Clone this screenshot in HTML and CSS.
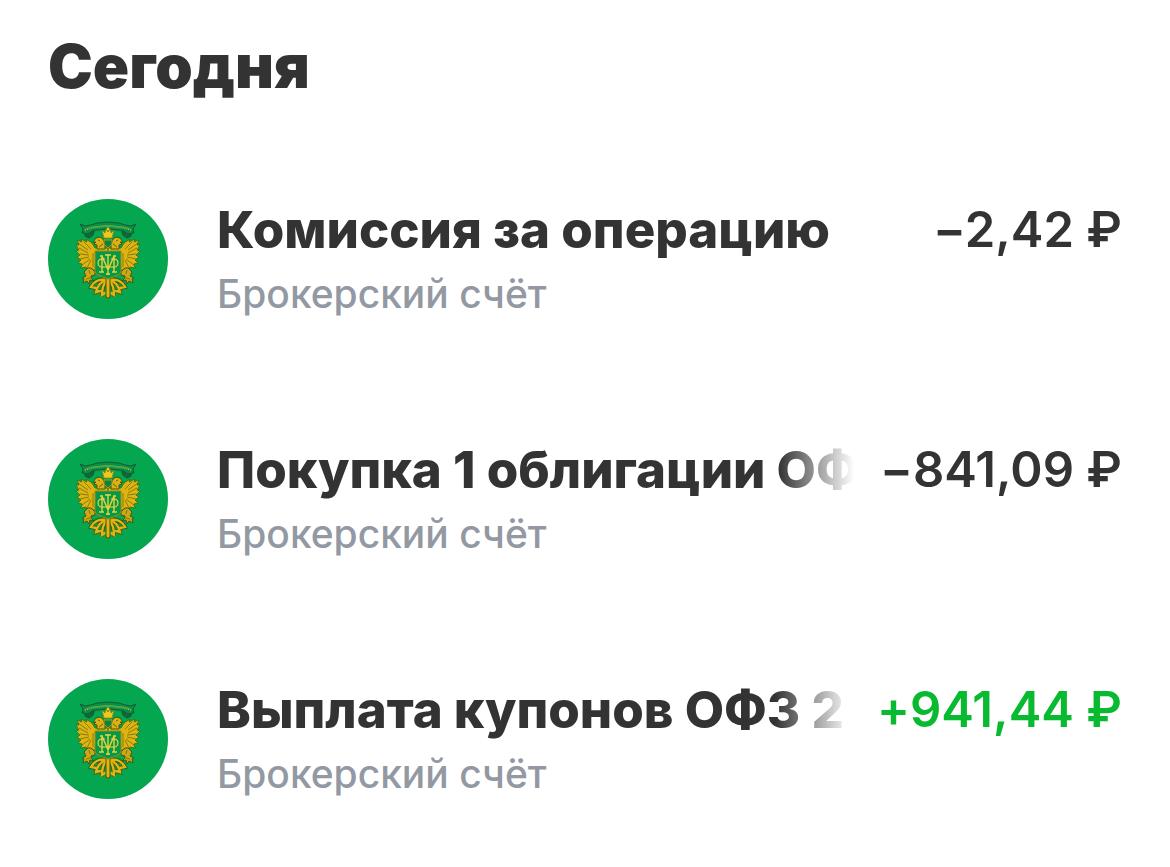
FILE: index.html
```html
<!DOCTYPE html>
<html lang="ru">
<head>
  <meta charset="UTF-8">
  <meta name="viewport" content="width=device-width, initial-scale=1.0">
  <title>Операции</title>
  <link rel="stylesheet" href="styles.css">
</head>
<body>

  <svg class="sprite" aria-hidden="true">
    <defs>
      <g id="half">
        <!-- крыло -->
        <path fill="#e2b310" stroke="#3c6a16" stroke-width=".8" d="M60 49 L47 49 L44 44 L38 40 L39 43 L33 40 L34 43 L29 41 L31 46 L28 46 L31 51 L28 52 L32 56 L29 58 L33 61 L30 64 L34 65 L33 69 L38 68 L39 71 L43 69 L47 72 L48 54 L60 53 Z"/>
        <path fill="none" stroke="#4f6b12" stroke-width=".7" d="M30 44 L40 51 M31 49 L40 54 M32 55 L41 56 M32 60 L41 58 M34 66 L42 60 M39 69 L43 61 M36 43 L43 50 M45 54 L45 68"/>
        <!-- голова -->
        <path fill="#dfb010" stroke="#3c5a12" stroke-width="1" d="M57 50 L57 45 L55 40 L52 38 L48 39 L45 43 L48 43 L46 45 L49 46 L49 50 Z"/>
        <path fill="none" stroke="#4f6b12" stroke-width="1" d="M50 41 L52 42 M51 48 L55 45"/>
        <!-- лапа -->
        <path fill="#d0a613" stroke="#3c5a12" stroke-width="1" d="M40 69 L43 69 L47 73 L47 76 L43 77 L43 79 L46 82 L42 81 L41 85 L39 82 L35 84 L36 80 L34 79 L38 77 L36 73 Z"/>
        <path fill="none" stroke="#4f6b12" stroke-width=".7" d="M41 71 L42 75 M38 80 L42 79"/>
        <!-- хвост -->
        <g fill="none" stroke-linecap="round">
          <path stroke="#3c5a12" stroke-width="4" d="M58 81 Q48 79 43 88 L48 89 M58 81 Q50 84 48 93 L52 92 M59 81 Q54 86 54 96"/>
          <path stroke="#e2b411" stroke-width="2.4" d="M58 81 Q48 79 43 88 L48 89 M58 81 Q50 84 48 93 L52 92 M59 81 Q54 86 54 96 L57 94"/>
        </g>
      </g>
      <symbol id="emblem" viewBox="0 0 120 120">
        <circle cx="60" cy="60" r="60" fill="#04a650"/>
        <use href="#half"/>
        <use href="#half" transform="translate(120 0) scale(-1 1)"/>
        <path stroke="#3c5a12" stroke-width="5" stroke-linecap="round" d="M60 79 V97"/>
        <path stroke="#e2b411" stroke-width="3" stroke-linecap="round" d="M60 80 V97"/>
        <!-- лента -->
        <path fill="#126a3a" stroke="#155233" stroke-width="1" d="M37 33 L46 32 L45 36 L41 39 L37 37 Z M83 33 L74 32 L75 36 L79 39 L83 37 Z"/>
        <path fill="#058f47" stroke="#175834" stroke-width="1" d="M32 25 L37 27 Q44 26 49 24 Q60 22 71 24 Q76 26 83 27 L88 25 L85 30 L86 34 L80 35 Q76 31 70 31 Q60 29 50 31 Q44 31 40 35 L34 34 L35 30 Z"/>
        <path fill="none" stroke="#a5ba3c" stroke-width="2" stroke-dasharray="1 1" d="M37 31 Q43 28 50 28 Q60 26 70 28 Q77 28 83 31"/>
        <!-- корона -->
        <path fill="#f6c516" stroke="#8b780f" stroke-width=".6" d="M56 39 L54 31 L57 34 L58 30 L60 33 L62 30 L63 34 L66 31 L64 39 Z"/>
        <circle cx="60" cy="30" r="1.4" fill="#f6c516"/>
        <path fill="#088440" stroke="#b39911" stroke-width="1" d="M56 41 H64 V45 L60 49 L56 45 Z"/>
        <!-- щит -->
        <path fill="#04994a" stroke="#94901a" stroke-width="1" d="M47 52 H73 V73 Q72 76 67 77 L60 80 L53 77 Q48 76 47 73 Z"/>
        <path fill="none" stroke="#ecd03a" stroke-width="1.4" d="M60 55 V76 M54 57 V73 M66 57 V73 M54 57 L60 71 L66 57 M57 56 H63 M52 57 H55 M65 57 H68 M51 73 H56 M64 73 H69 M58 75 H62"/>
        <path fill="none" stroke="#ecd03a" stroke-width="1.2" d="M57 60 Q50 59 50 64 Q50 69 57 68 M63 60 Q70 59 70 64 Q70 69 63 68 M57 68 H63"/>
      </symbol>
    </defs>
  </svg>

  <main class="feed">
    <h1 class="feed-title">Сегодня</h1>

    <ul class="operations">
      <li class="operation">
        <svg class="logo" aria-hidden="true"><use href="#emblem"/></svg>
        <div class="info">
          <div class="row">
            <span class="name">Комиссия за операцию</span>
            <span class="amount">−2,42 ₽</span>
          </div>
          <div class="account">Брокерский счёт</div>
        </div>
      </li>

      <li class="operation">
        <svg class="logo" aria-hidden="true"><use href="#emblem"/></svg>
        <div class="info">
          <div class="row">
            <span class="name">Покупка 1 облигации ОФ</span>
            <span class="amount">−841,09 ₽</span>
          </div>
          <div class="account">Брокерский счёт</div>
        </div>
      </li>

      <li class="operation">
        <svg class="logo" aria-hidden="true"><use href="#emblem"/></svg>
        <div class="info">
          <div class="row">
            <span class="name">Выплата купонов ОФЗ 2</span>
            <span class="amount income">+941,44 ₽</span>
          </div>
          <div class="account">Брокерский счёт</div>
        </div>
      </li>
    </ul>
  </main>

</body>
</html>
```

FILE: styles.css
```css
* {
  box-sizing: border-box;
}

body {
  margin: 0;
  background: #fff;
  color: #333;
  font-family: Inter, "Noto Sans", sans-serif;
}

.sprite {
  position: absolute;
  width: 0;
  height: 0;
}

.feed {
  padding: 31px 48px;
}

.feed-title {
  margin: 0;
  font-size: 60px;
  line-height: 70px;
  font-weight: 900;
}

.operations {
  list-style: none;
  margin: 98px 0 0;
  padding: 0;
  display: flex;
  flex-direction: column;
  gap: 112px;
}

.operation {
  display: flex;
  gap: 49px;
}

.logo {
  flex: none;
  width: 120px;
  height: 120px;
}

.info {
  flex: 1;
  min-width: 0;
}

.row {
  display: flex;
  gap: 26px;
  font-size: 51px;
  line-height: 62px;
  white-space: nowrap;
}

.name {
  flex: 1;
  min-width: 0;
  overflow: hidden;
  font-weight: 800;
  -webkit-mask-image: linear-gradient(to left, transparent, #000 76px);
  mask-image: linear-gradient(to left, transparent, #000 76px);
}

.amount {
  font-size: 49px;
  font-weight: 600;
  font-variant-ligatures: no-contextual;
}

.income {
  color: #08ba30;
}

.account {
  color: #9299a2;
  font-size: 39px;
  line-height: 66px;
  font-weight: 500;
}
```
